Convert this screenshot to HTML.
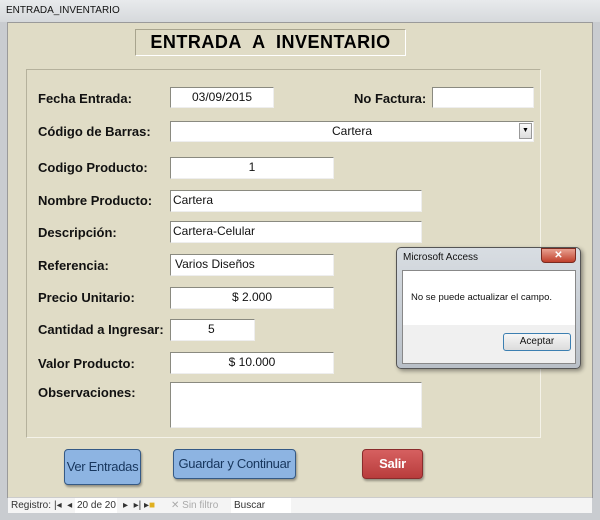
<!DOCTYPE html>
<html><head><meta charset="utf-8"><style>
*{margin:0;padding:0;box-sizing:border-box}
body{width:600px;height:520px;background:#c9ccd0;position:relative;overflow:hidden;font-family:"Liberation Sans",sans-serif;white-space:nowrap}
.a{position:absolute}
.lbl{position:absolute;font-weight:bold;font-size:13px;color:#111;left:38px}
.box{position:absolute;background:#fff;border-top:1px solid #8a8a80;border-left:1px solid #8a8a80;border-right:1px solid #eee;border-bottom:1px solid #eee;font-size:12px;color:#111;line-height:19px}
.c{text-align:center}
.l{padding-left:2px}
.btn{position:absolute;border-radius:4px;font-size:13px;text-align:center;box-shadow:1px 2px 2px rgba(0,0,0,.35);letter-spacing:-0.3px}
</style></head><body>
<div class="a" style="left:0;top:0;width:600px;height:22px;background:linear-gradient(#e8eaec,#d6d9dc)"></div>
<div class="a" style="left:6px;top:5px;font-size:10px;color:#111">ENTRADA_INVENTARIO</div>
<div class="a" style="left:7px;top:22px;width:586px;height:476px;background:#e0dcc6;border:1px solid #9a9a9a"></div>
<div class="a" style="left:135px;top:29px;width:271px;height:27px;background:#e0dcc6;border:1px solid #a8a48e;border-right-color:#fff;border-bottom-color:#fff;font-weight:bold;font-size:18px;letter-spacing:0.5px;text-align:center;line-height:25px;color:#000;font-family:'Liberation Sans',sans-serif">ENTRADA &nbsp;A &nbsp;INVENTARIO</div>
<div class="a" style="left:26px;top:69px;width:515px;height:369px;border:1px solid #b5b19c;border-right-color:#f4f2e8;border-bottom-color:#f4f2e8"></div>

<div class="lbl" style="top:91px">Fecha Entrada:</div>
<div class="box c" style="left:170px;top:87px;width:104px;height:21px">03/09/2015</div>
<div class="lbl" style="left:354px;top:91px">No Factura:</div>
<div class="box" style="left:432px;top:87px;width:102px;height:21px"></div>

<div class="lbl" style="top:124px">Código de Barras:</div>
<div class="box c" style="left:170px;top:121px;width:364px;height:21px">Cartera</div>
<div class="a" style="left:519px;top:123px;width:13px;height:16px;background:linear-gradient(#fafafa,#ddd);border:1px solid #999;font-size:7px;text-align:center;line-height:14px">▼</div>

<div class="lbl" style="top:160px">Codigo Producto:</div>
<div class="box c" style="left:170px;top:157px;width:164px;height:22px">1</div>
<div class="lbl" style="top:193px">Nombre Producto:</div>
<div class="box l" style="left:170px;top:190px;width:252px;height:22px">Cartera</div>
<div class="lbl" style="top:225px">Descripción:</div>
<div class="box l" style="left:170px;top:221px;width:252px;height:22px">Cartera-Celular</div>
<div class="lbl" style="top:258px">Referencia:</div>
<div class="box" style="left:170px;top:254px;width:164px;height:22px;padding-left:4px">Varios Diseños</div>
<div class="lbl" style="top:290px">Precio Unitario:</div>
<div class="box c" style="left:170px;top:287px;width:164px;height:22px">$ 2.000</div>
<div class="lbl" style="top:322px">Cantidad a Ingresar:</div>
<div class="box" style="left:170px;top:319px;width:85px;height:22px;padding-left:37px">5</div>
<div class="lbl" style="top:356px">Valor Producto:</div>
<div class="box c" style="left:170px;top:352px;width:164px;height:22px">$ 10.000</div>
<div class="lbl" style="top:385px">Observaciones:</div>
<div class="box" style="left:170px;top:382px;width:252px;height:46px"></div>

<div class="btn" style="left:64px;top:449px;width:77px;height:36px;line-height:34px;background:#8db4e2;border:1px solid #355a86;color:#17365d">Ver Entradas</div>
<div class="btn" style="left:173px;top:449px;width:123px;height:30px;line-height:28px;background:#8db4e2;border:1px solid #355a86;color:#17365d">Guardar y Continuar</div>
<div class="btn" style="left:362px;top:449px;width:61px;height:30px;line-height:28px;background:linear-gradient(#d66060,#b83c3c);border:1px solid #8a2c2c;color:#fff;font-weight:bold">Salir</div>

<div class="a" style="left:8px;top:497px;width:584px;height:16px;background:#f4f4f4;border-top:1px solid #ccc;font-size:10px;color:#333;line-height:15px">
<span class="a" style="left:3px">Registro:</span>
<span class="a" style="left:46px">|◂ &nbsp;◂</span>
<span class="a" style="left:67px;background:#fff;width:42px;padding-left:2px">20 de 20</span>
<span class="a" style="left:115px">▸ &nbsp;▸| ▸<span style="color:#e0b020">■</span></span>
<span class="a" style="left:163px;color:#aaa">✕ Sin filtro</span>
<span class="a" style="left:223px;background:#fff;width:60px;padding-left:3px">Buscar</span>
</div>

<div class="a" style="left:396px;top:247px;width:185px;height:122px;background:linear-gradient(#d8dde2,#b9c0c8);border:1px solid #555;border-radius:5px;box-shadow:2px 2px 4px rgba(0,0,0,.4)"></div>
<div class="a" style="left:403px;top:252px;font-size:10px;color:#111">Microsoft Access</div>
<div class="a" style="left:541px;top:248px;width:35px;height:15px;background:linear-gradient(#e8a090,#c0402c);border:1px solid #7a2a20;border-radius:0 0 4px 4px;color:#fff;font-size:10px;font-weight:bold;text-align:center;line-height:13px">✕</div>
<div class="a" style="left:402px;top:270px;width:174px;height:94px;background:#f0f0f0;border:1px solid #888"></div>
<div class="a" style="left:403px;top:271px;width:172px;height:54px;background:#fff"></div>
<div class="a" style="left:411px;top:292px;font-size:9.5px;color:#111">No se puede actualizar el campo.</div>
<div class="a" style="left:503px;top:333px;width:68px;height:18px;background:linear-gradient(#f6f6f6,#dcdcdc);border:1px solid #3c7fb1;border-radius:3px;font-size:10px;text-align:center;line-height:16px;color:#111">Aceptar</div>
</body></html>
